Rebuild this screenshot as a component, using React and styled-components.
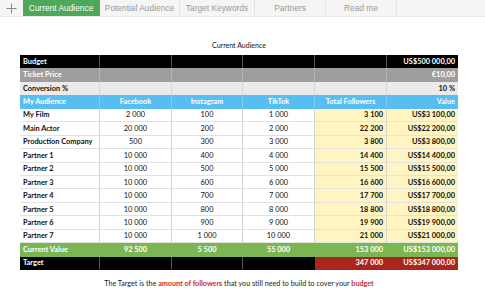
import React from "react";
import styled, { createGlobalStyle } from "styled-components";

const Global = createGlobalStyle`
  html, body { margin: 0; padding: 0; background: #ffffff; }
  body { font-family: "Lato", "Liberation Sans", sans-serif; }
`;

const Page = styled.div`
  width: 485px;
  height: 300px;
  overflow: hidden;
  display: flex;
  flex-direction: column;
`;

const TabBar = styled.div`
  display: flex;
  height: 17px;
  background: #f5f5f5;
  border-bottom: 1px solid #e8e8e8;
  box-sizing: border-box;
`;

const AddTab = styled.div`
  width: 23px;
  display: flex;
  align-items: center;
  justify-content: center;
`;

const Tab = styled.div`
  width: ${(p) => p.$w}px;
  display: flex;
  align-items: center;
  justify-content: center;
  font-family: "Liberation Sans", Arial, sans-serif;
  font-size: 8.4px;
  color: ${(p) => (p.$active ? "#ffffff" : "#9a9a9a")};
  background: ${(p) => (p.$active ? "#4fa85a" : "transparent")};
  border-right: 1px solid ${(p) => (p.$active ? "#4fa85a" : "#e4e4e4")};
  box-sizing: border-box;
  white-space: nowrap;
`;

const Sheet = styled.div`
  padding: 23px 0 0 20px;
  display: flex;
  flex-direction: column;
`;

const Title = styled.div`
  width: 438px;
  text-align: center;
  font-family: "Lato", sans-serif;
  font-size: 7px;
  color: #111;
  height: 11px;
  line-height: 11px;
  margin-bottom: 4px;
`;

const Table = styled.div`
  width: 438px;
  display: flex;
  flex-direction: column;
`;

const Row = styled.div`
  display: grid;
  grid-template-columns: 80px 72px 71px 72px 72px 71px;
  height: 13.44px;
  background: ${(p) => p.$bg || "#ffffff"};
  color: ${(p) => p.$fg || "#111"};
`;

const Cell = styled.div`
  display: flex;
  align-items: center;
  justify-content: ${(p) =>
    p.$align === "right" ? "flex-end" : p.$align === "center" ? "center" : "flex-start"};
  padding: 0 3px;
  font-family: "Lato", sans-serif;
  font-size: 7.4px;
  font-weight: ${(p) => (p.$bold ? 700 : 400)};
  background: ${(p) => p.$bg || "transparent"};
  color: ${(p) => p.$fg || "inherit"};
  border-right: 1px solid ${(p) => p.$line || "#d4d4d4"};
  border-bottom: 1px solid ${(p) => p.$hline || "#e2e2e2"};
  box-sizing: border-box;
  white-space: nowrap;
  overflow: hidden;
  &:last-child { border-right: none; }
`;

const Footer = styled.div`
  margin-top: 9px;
  width: 478px;
  text-align: center;
  font-family: "Lato", sans-serif;
  font-size: 7.2px;
  color: #222;
  margin-left: -20px;
`;

const Hl = styled.span`
  color: #c8321e;
  font-weight: 700;
`;

const YELLOW = "#fff5c2";

const data = [
  ["My Film", "2 000", "100", "1 000", "3 100", "US$3 100,00"],
  ["Main Actor", "20 000", "200", "2 000", "22 200", "US$22 200,00"],
  ["Production Company", "500", "300", "3 000", "3 800", "US$3 800,00"],
  ["Partner 1", "10 000", "400", "4 000", "14 400", "US$14 400,00"],
  ["Partner 2", "10 000", "500", "5 000", "15 500", "US$15 500,00"],
  ["Partner 3", "10 000", "600", "6 000", "16 600", "US$16 600,00"],
  ["Partner 4", "10 000", "700", "7 000", "17 700", "US$17 700,00"],
  ["Partner 5", "10 000", "800", "8 000", "18 800", "US$18 800,00"],
  ["Partner 6", "10 000", "900", "9 000", "19 900", "US$19 900,00"],
  ["Partner 7", "10 000", "1 000", "10 000", "21 000", "US$21 000,00"],
];

const tabs = [
  { label: "Current Audience", w: 77, active: true },
  { label: "Potential Audience", w: 80 },
  { label: "Target Keywords", w: 75 },
  { label: "Partners", w: 71 },
  { label: "Read me", w: 71 },
];

function TopRow({ label, value, bg, fg, line, hline }) {
  return (
    <Row $bg={bg} $fg={fg}>
      <Cell $bold $line={line} $hline={hline}>{label}</Cell>
      <Cell $line={line} $hline={hline} />
      <Cell $line={line} $hline={hline} />
      <Cell $line={line} $hline={hline} />
      <Cell $line={line} $hline={hline} />
      <Cell $bold $align="right" $hline={hline}>{value}</Cell>
    </Row>
  );
}

export default function App() {
  return (
    <Page>
      <Global />
      <TabBar>
        <AddTab>
          <svg width="11" height="11" viewBox="0 0 11 11">
            <path d="M5.5 0.5v10M0.5 5.5h10" stroke="#8c8c8c" strokeWidth="1" fill="none" />
          </svg>
        </AddTab>
        {tabs.map((t) => (
          <Tab key={t.label} $w={t.w} $active={t.active}>
            {t.label}
          </Tab>
        ))}
      </TabBar>
      <Sheet>
        <Title>Current Audience</Title>
        <Table>
          <TopRow label="Budget" value="US$500 000,00" bg="#000" fg="#fff" line="#555" hline="#000" />
          <TopRow label="Ticket Price" value="€10,00" bg="#9e9e9e" fg="#fff" line="#b5b5b5" hline="#9e9e9e" />
          <TopRow label="Conversion %" value="10 %" bg="#ebebeb" fg="#111" line="#d6d6d6" hline="#ebebeb" />
          <Row $bg="#58bdf0" $fg="#fff">
            <Cell $bold $line="#7ccbf3" $hline="#58bdf0">My Audience</Cell>
            <Cell $bold $align="center" $line="#7ccbf3" $hline="#58bdf0">Facebook</Cell>
            <Cell $bold $align="center" $line="#7ccbf3" $hline="#58bdf0">Instagram</Cell>
            <Cell $bold $align="center" $line="#7ccbf3" $hline="#58bdf0">TikTok</Cell>
            <Cell $bold $align="center" $line="#7ccbf3" $hline="#58bdf0">Total Followers</Cell>
            <Cell $bold $align="right" $hline="#58bdf0">Value</Cell>
          </Row>
          {data.map((r) => (
            <Row key={r[0]}>
              <Cell $bold>{r[0]}</Cell>
              <Cell $align="center">{r[1]}</Cell>
              <Cell $align="center">{r[2]}</Cell>
              <Cell $align="center">{r[3]}</Cell>
              <Cell $bold $align="right" $bg={YELLOW}>{r[4]}</Cell>
              <Cell $bold $align="right" $bg={YELLOW}>{r[5]}</Cell>
            </Row>
          ))}
          <Row $bg="#7cb653" $fg="#fff">
            <Cell $bold $line="#7cb653" $hline="#7cb653">Current Value</Cell>
            <Cell $bold $align="center" $line="#7cb653" $hline="#7cb653">92 500</Cell>
            <Cell $bold $align="center" $line="#7cb653" $hline="#7cb653">5 500</Cell>
            <Cell $bold $align="center" $line="#7cb653" $hline="#7cb653">55 000</Cell>
            <Cell $bold $align="right" $line="#7cb653" $hline="#7cb653">153 000</Cell>
            <Cell $bold $align="right" $hline="#7cb653">US$153 000,00</Cell>
          </Row>
          <Row $bg="#000" $fg="#fff">
            <Cell $bold $line="#555" $hline="#000">Target</Cell>
            <Cell $line="#555" $hline="#000" />
            <Cell $line="#555" $hline="#000" />
            <Cell $line="#000" $hline="#000" />
            <Cell $bold $align="right" $bg="#a8261b" $line="#a8261b" $hline="#a8261b">347 000</Cell>
            <Cell $bold $align="right" $bg="#a8261b" $hline="#a8261b">US$347 000,00</Cell>
          </Row>
        </Table>
        <Footer>
          The Target is the <Hl>amount of followers</Hl> that you still need to build to cover your <Hl>budget</Hl>
        </Footer>
      </Sheet>
    </Page>
  );
}
